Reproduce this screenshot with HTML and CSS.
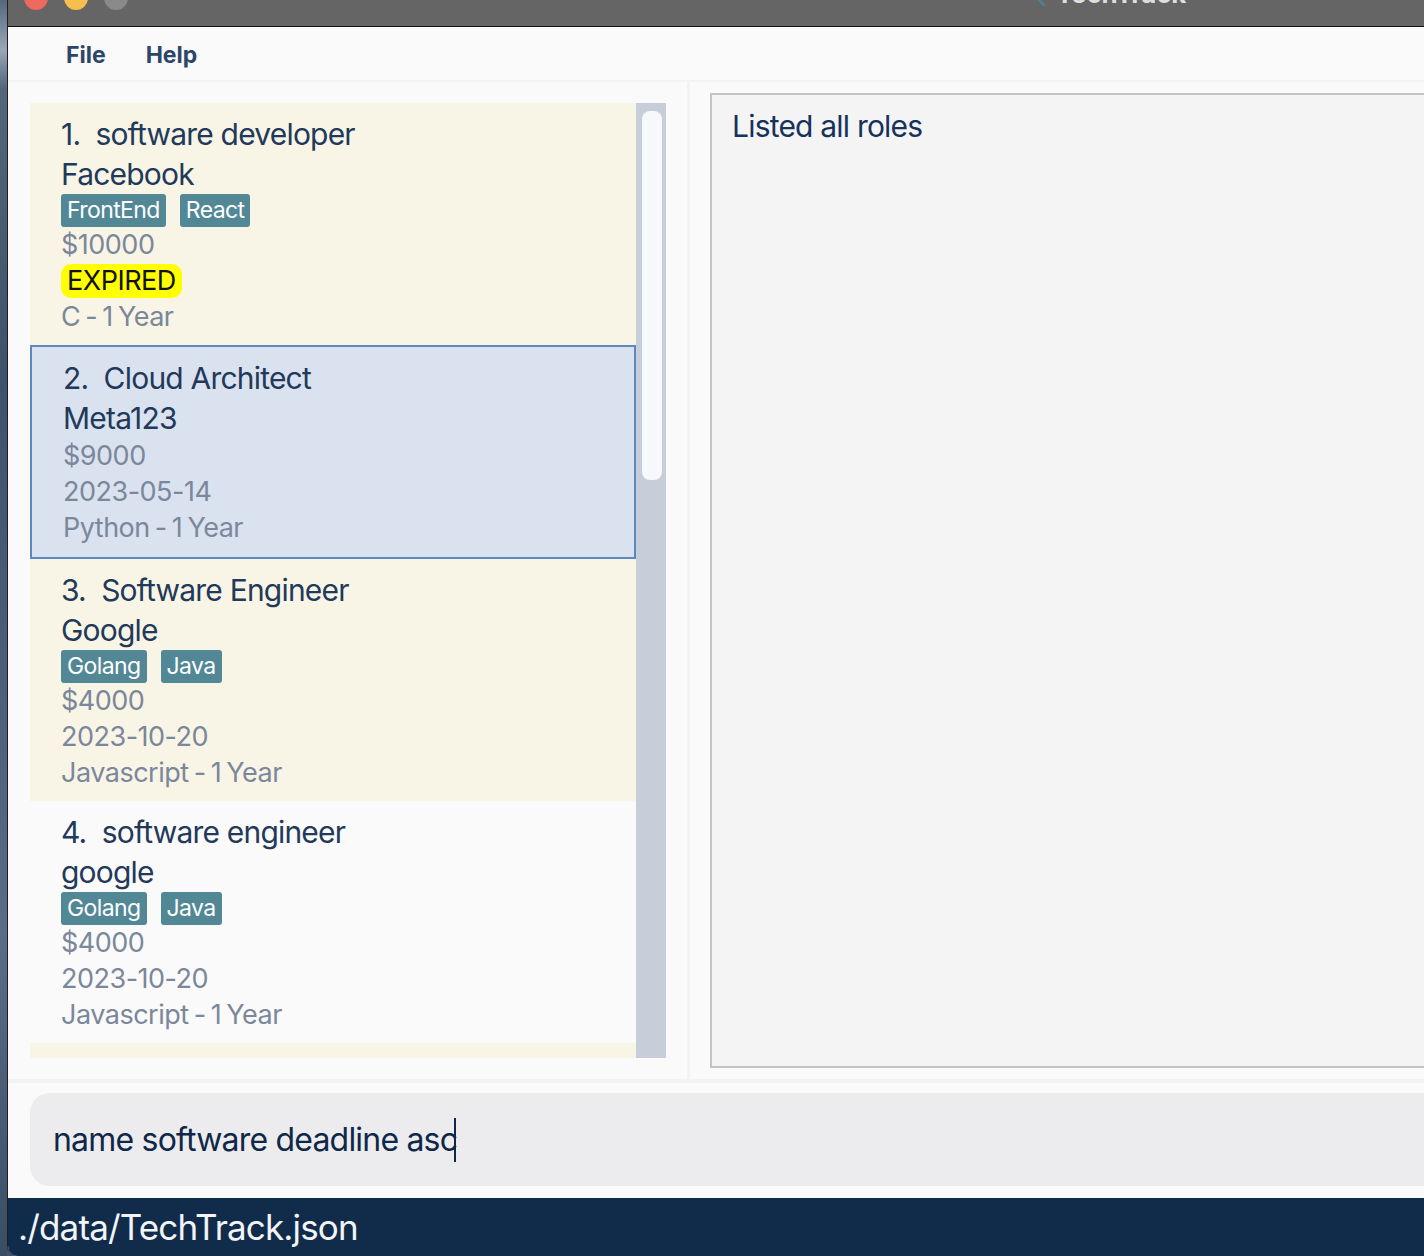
FILE: index.html
```html
<!DOCTYPE html>
<html>
<head>
<meta charset="utf-8">
<title>TechTrack</title>
<link rel="stylesheet" href="styles.css">
</head>
<body>
<div class="screen">
  <div class="desk"></div>
  <div class="window">
    <div class="titlebar">
      <div class="lights">
        <span class="light red"></span>
        <span class="light yellow"></span>
        <span class="light grey"></span>
      </div>
      <div class="title">
        <svg class="mag" width="26" height="26" viewBox="0 0 26 26"><circle cx="10" cy="10" r="8" fill="none" stroke="#4f7e9c" stroke-width="2.5"/><line x1="16" y1="16" x2="24" y2="24" stroke="#4f7e9c" stroke-width="2.5" stroke-linecap="round"/></svg>
        <span class="title-text">TechTrack</span>
      </div>
    </div>
    <div class="menubar">
      <span class="menu">File</span>
      <span class="menu">Help</span>
    </div>
    <div class="main">
      <div class="left">
        <div class="list">
          <div class="cards">
            <div class="card beige">
              <div class="role">1.&nbsp; software developer</div>
              <div class="company">Facebook</div>
              <div class="tags"><span class="tag">FrontEnd</span><span class="tag">React</span></div>
              <div class="sub">$10000</div>
              <div class="sub badge-row"><span class="expired">EXPIRED</span></div>
              <div class="sub">C - 1 Year</div>
            </div>
            <div class="card selected">
              <div class="role">2.&nbsp; Cloud Architect</div>
              <div class="company">Meta123</div>
              <div class="sub">$9000</div>
              <div class="sub">2023-05-14</div>
              <div class="sub">Python - 1 Year</div>
            </div>
            <div class="card beige">
              <div class="role">3.&nbsp; Software Engineer</div>
              <div class="company">Google</div>
              <div class="tags"><span class="tag">Golang</span><span class="tag">Java</span></div>
              <div class="sub">$4000</div>
              <div class="sub">2023-10-20</div>
              <div class="sub">Javascript - 1 Year</div>
            </div>
            <div class="card plain">
              <div class="role">4.&nbsp; software engineer</div>
              <div class="company">google</div>
              <div class="tags"><span class="tag">Golang</span><span class="tag">Java</span></div>
              <div class="sub">$4000</div>
              <div class="sub">2023-10-20</div>
              <div class="sub">Javascript - 1 Year</div>
            </div>
            <div class="card beige card-peek"></div>
          </div>
          <div class="scrollbar"><div class="thumb"></div></div>
        </div>
      </div>
      <div class="divider"></div>
      <div class="right">
        <div class="result">Listed all roles</div>
      </div>
    </div>
    <div class="hsep"></div>
    <div class="cmd-area">
      <div class="cmd"><span class="cmd-text">name software deadline asc</span><span class="caret"></span></div>
    </div>
    <div class="status">./data/TechTrack.json</div>
  </div>
</div>
</body>
</html>
```

FILE: styles.css
```css
* { box-sizing: border-box; }
html, body {
  margin: 0;
  padding: 0;
  width: 1424px;
  height: 1256px;
  overflow: hidden;
  background: #3f5269;
}
.screen {
  display: flex;
  width: 1424px;
  height: 1256px;
  overflow: hidden;
  font-family: Inter, "Noto Sans", sans-serif;
}
.desk {
  flex: 0 0 7px;
  background: linear-gradient(180deg, #55677c 0%, #9aa7b4 4%, #54667c 7%, #3f5269 30%, #4c6078 55%, #5a6d84 75%, #3b4d64 100%);
}
.window {
  flex: 0 0 1700px;
  display: flex;
  flex-direction: column;
  border-left: 1px solid #1d1f22;
  background: #fafafa;
  border-bottom-left-radius: 10px;
  overflow: hidden;
}

/* title bar */
.titlebar {
  height: 27px;
  flex: 0 0 27px;
  background: #646564;
  border-bottom: 1px solid #111;
  display: flex;
  align-items: flex-start;
  padding-left: 16px;
  overflow: hidden;
}
.lights {
  display: flex;
  gap: 16px;
  margin-top: -14px;
}
.light {
  width: 24px;
  height: 24px;
  border-radius: 50%;
  display: block;
}
.red { background: #ee6a5e; }
.yellow { background: #f5be4f; }
.grey { background: #8a8a8a; }
.title {
  display: flex;
  align-items: flex-end;
  margin-left: 892px;
  margin-top: -19px;
  gap: 10px;
}
.mag { display: block; margin-bottom: 0; }
.title-text {
  font-size: 26px;
  line-height: 26px;
  font-weight: 700;
  color: #dedede;
  letter-spacing: -0.2px;
}

/* menu */
.menubar {
  flex: 0 0 55px;
  height: 55px;
  display: flex;
  align-items: center;
  gap: 40px;
  padding: 3px 0 0 58px;
  border-bottom: 2px solid #f2f3f5;
}
.menu {
  font-size: 23px;
  font-weight: 700;
  color: #2a4668;
  line-height: 30px;
}

/* main */
.main {
  flex: 0 0 997px;
  height: 997px;
  display: flex;
}
.left {
  flex: 0 0 679px;
  padding: 21px 21px 21px 22px;
}
.list {
  height: 955px;
  display: flex;
}
.cards {
  flex: 0 0 606px;
  overflow: hidden;
}
.card {
  padding: 11px 20px 10px 31px;
}
.card-peek { height: 60px; }
.beige { background: #f8f5e6; }
.plain { background: #fafafa; }
.selected {
  background: #dae2ef;
  border: 2px solid #5b88c0;
  padding: 11px 18px 11px 31px;
}
.role, .company {
  font-size: 30px;
  line-height: 40px;
  color: #22395a;
  letter-spacing: -0.8px;
  white-space: nowrap;
}
.tags {
  display: flex;
  gap: 14px;
  height: 33px;
}
.tag {
  background: #528796;
  color: #ffffff;
  font-size: 23px;
  line-height: 33px;
  padding: 0 6px;
  border-radius: 3px;
  letter-spacing: -0.6px;
}
.sub {
  font-size: 27px;
  line-height: 36px;
  height: 36px;
  color: #7b879a;
  letter-spacing: -0.5px;
  word-spacing: -2px;
  white-space: nowrap;
}
.badge-row {
  display: flex;
  align-items: center;
}
.expired {
  background: #ffff00;
  color: #111111;
  line-height: 34px;
  padding: 0 6px;
  border-radius: 10px;
  letter-spacing: -0.5px;
}
.scrollbar {
  flex: 0 0 30px;
  background: #c7ceda;
  padding: 8px 4px 0 6px;
}
.thumb {
  height: 369px;
  background: #f7f8fb;
  border-radius: 8px;
}
.divider {
  flex: 0 0 3px;
  background: #f2f3f5;
}
.right {
  flex: 1;
  padding: 11px 0 11px 20px;
}
.result {
  height: 975px;
  border: 2px solid #c4c4c4;
  background: #f4f4f4;
  padding: 11px 20px;
  font-size: 30px;
  line-height: 40px;
  color: #17325a;
  letter-spacing: -0.8px;
}

/* command */
.hsep {
  flex: 0 0 4px;
  background: #f2f3f5;
}
.cmd-area {
  flex: 0 0 115px;
  padding: 10px 0 12px 22px;
}
.cmd {
  height: 93px;
  background: #ececee;
  border-radius: 20px;
  display: flex;
  align-items: center;
  padding-left: 23px;
}
.cmd-text {
  font-size: 32px;
  line-height: 44px;
  color: #0f2748;
  letter-spacing: -0.8px;
}
.caret {
  display: block;
  width: 2px;
  height: 44px;
  background: #0f2748;
  margin-left: -3px;
}

/* status */
.status {
  flex: 0 0 58px;
  background: #112c4b;
  color: #f2f4f7;
  font-size: 35px;
  line-height: 58px;
  padding-left: 10px;
  letter-spacing: -0.85px;
}
```
